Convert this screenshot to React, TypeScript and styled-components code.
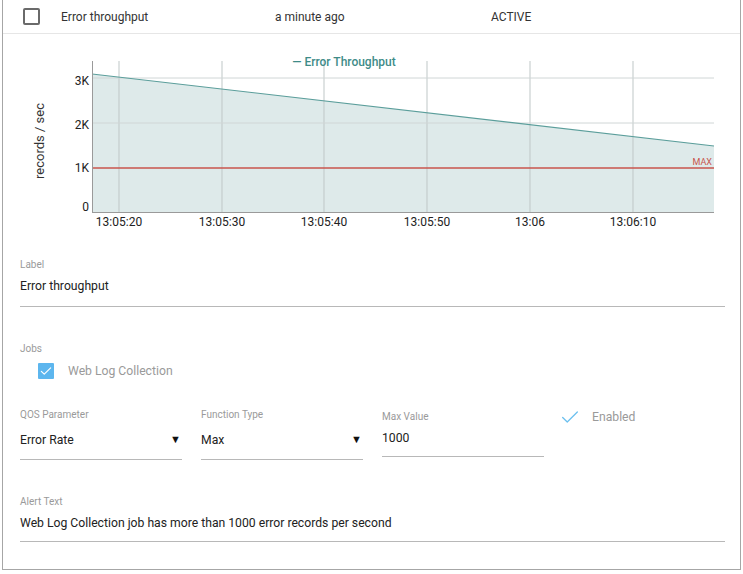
import React from "react";
import styled, { createGlobalStyle } from "styled-components";

const Global = createGlobalStyle`
  html, body { margin: 0; padding: 0; background: #fff; }
  body { font-family: Roboto, "Liberation Sans", Arial, sans-serif; color: #222; }
`;

const Card = styled.div`
  margin-left: 2px;
  width: 737px;
  height: 569px;
  border: 1px solid #a6a6a6;
  border-top: none;
  background: #fff;
  display: flex;
  flex-direction: column;
`;

const Header = styled.div`
  height: 33px;
  border-bottom: 1px solid #e6e6e6;
  display: flex;
  align-items: center;
  padding-left: 20px;
  font-size: 12px;
  color: #333;
`;

const HeaderBox = styled.div`
  width: 13px;
  height: 13px;
  border: 2px solid #6a6a6a;
  border-radius: 2px;
  margin-right: 21px;
`;

const HeaderCell = styled.div<{ $w: number }>`
  width: ${(p) => p.$w}px;
`;

const ChartSvg = styled.svg`
  display: block;
  width: 737px;
  height: 200px;
  font-family: Roboto, "Liberation Sans", Arial, sans-serif;
`;

const Form = styled.div`
  padding: 0 15px 0 17px;
  display: flex;
  flex-direction: column;
`;

const Caption = styled.div`
  font-size: 10px;
  line-height: 14px;
  color: #9a9a9a;
`;

const Field = styled.div<{ $top: number }>`
  margin-top: ${(p) => p.$top}px;
  display: flex;
  flex-direction: column;
`;

const Value = styled.div<{ $pad?: number }>`
  font-size: 12.2px;
  line-height: 20px;
  color: #222;
  margin-top: 4px;
  padding-bottom: ${(p) => p.$pad ?? 10}px;
  border-bottom: 1px solid #b8b8b8;
`;

const CheckRow = styled.div`
  display: flex;
  align-items: center;
  margin-top: 5px;
  margin-left: 18px;
  height: 20px;
`;

const BlueBox = styled.div`
  width: 16px;
  height: 16px;
  background: #5db6ee;
  border-radius: 1px;
  display: flex;
  align-items: center;
  justify-content: center;
  margin-right: 14px;
`;

const Muted = styled.span`
  font-size: 12.2px;
  color: #9a9a9a;
`;

const Row = styled.div`
  margin-top: 27px;
  display: flex;
  gap: 19px;
  align-items: flex-start;
`;

const Col = styled.div<{ $shift?: number }>`
  width: 162px;
  display: flex;
  flex-direction: column;
  margin-top: ${(p) => p.$shift || 0}px;
`;

const SelectValue = styled(Value)<{ $tight?: boolean }>`
  display: flex;
  justify-content: space-between;
  align-items: center;
  margin-top: ${(p) => (p.$tight ? 4 : 8)}px;
  padding-bottom: ${(p) => (p.$tight ? 8 : 9)}px;
`;

const Arrow = styled.span`
  font-size: 11px;
  color: #111;
  margin-right: 1px;
`;

const Enabled = styled.div`
  display: flex;
  align-items: center;
  margin-top: -2px;
  margin-left: -4px;
  gap: 11px;
`;

const Check = ({ color, w, size }: { color: string; w: number; size: number }) => (
  <svg width={size} height={size} viewBox="0 0 24 24">
    <path d="M4 12.5l5 5L20 6.5" fill="none" stroke={color} strokeWidth={w} strokeLinecap="round" strokeLinejoin="round" />
  </svg>
);

const xTicks = [
  { x: 119, t: "13:05:20" },
  { x: 222, t: "13:05:30" },
  { x: 324, t: "13:05:40" },
  { x: 427, t: "13:05:50" },
  { x: 530, t: "13:06" },
  { x: 633, t: "13:06:10" },
];
const yTicks = [
  { y: 79, ly: 86, t: "3K" },
  { y: 124, ly: 130, t: "2K" },
  { y: 169, ly: 173, t: "1K" },
  { y: 213, ly: 212, t: "0" },
];

const Chart = () => (
  <ChartSvg viewBox="3 35 737 200">
    <polygon points="92,75 714,147 714,213 92,213" fill="#deeaea" />
    {xTicks.map((t) => (
      <line key={t.t} x1={t.x} x2={t.x} y1={62} y2={213} stroke="#bfc7c7" strokeWidth={1} />
    ))}
    {yTicks.slice(0, 2).map((t) => (
      <line key={t.t} x1={92} x2={714} y1={t.y} y2={t.y} stroke="#d0d6d6" strokeWidth={1} />
    ))}
    <line x1={92} x2={714} y1={75} y2={147} stroke="#5b9e9b" strokeWidth={1.2} />
    <line x1={92} x2={714} y1={169} y2={169} stroke="#c8544c" strokeWidth={1.6} />
    <line x1={92.5} x2={92.5} y1={62} y2={213} stroke="#9a9a9a" strokeWidth={1} />
    <line x1={92} x2={714} y1={213.5} y2={213.5} stroke="#9a9a9a" strokeWidth={1} />
    <text x={712} y={166} fontSize={9} fill="#c8544c" textAnchor="end">MAX</text>
    {yTicks.map((t) => (
      <text key={t.t} x={89} y={t.ly} fontSize={12} fill="#222" textAnchor="end">{t.t}</text>
    ))}
    {xTicks.map((t) => (
      <text key={t.t} x={t.x} y={227} fontSize={12} fill="#222" textAnchor="middle">{t.t}</text>
    ))}
    <text x={344} y={67} fontSize={12} fontWeight={500} fill="#3e8b88" textAnchor="middle">— Error Throughput</text>
    <text x={0} y={0} fontSize={13} fill="#333" textAnchor="middle" transform="translate(44 142) rotate(-90)">records / sec</text>
  </ChartSvg>
);

export default function App() {
  return (
    <>
      <Global />
      <Card>
        <Header>
          <HeaderBox />
          <HeaderCell $w={214}>Error throughput</HeaderCell>
          <HeaderCell $w={216}>a minute ago</HeaderCell>
          <HeaderCell $w={100}>ACTIVE</HeaderCell>
        </Header>
        <Chart />
        <Form>
          <Field $top={24}>
            <Caption>Label</Caption>
            <Value>Error throughput</Value>
          </Field>
          <Field $top={35}>
            <Caption>Jobs</Caption>
            <CheckRow>
              <BlueBox>
                <Check color="#fff" w={2} size={14} />
              </BlueBox>
              <Muted>Web Log Collection</Muted>
            </CheckRow>
          </Field>
          <Row>
            <Col>
              <Caption>QOS Parameter</Caption>
              <SelectValue>
                Error Rate<Arrow>▼</Arrow>
              </SelectValue>
            </Col>
            <Col>
              <Caption>Function Type</Caption>
              <SelectValue>
                Max<Arrow>▼</Arrow>
              </SelectValue>
            </Col>
            <Col $shift={2}>
              <Caption>Max Value</Caption>
              <SelectValue $tight>1000</SelectValue>
            </Col>
            <Enabled>
              <Check color="#6cc0ef" w={1.4} size={22} />
              <Muted>Enabled</Muted>
            </Enabled>
          </Row>
          <Field $top={35}>
            <Caption>Alert Text</Caption>
            <Value $pad={8}>Web Log Collection job has more than 1000 error records per second</Value>
          </Field>
        </Form>
      </Card>
    </>
  );
}
